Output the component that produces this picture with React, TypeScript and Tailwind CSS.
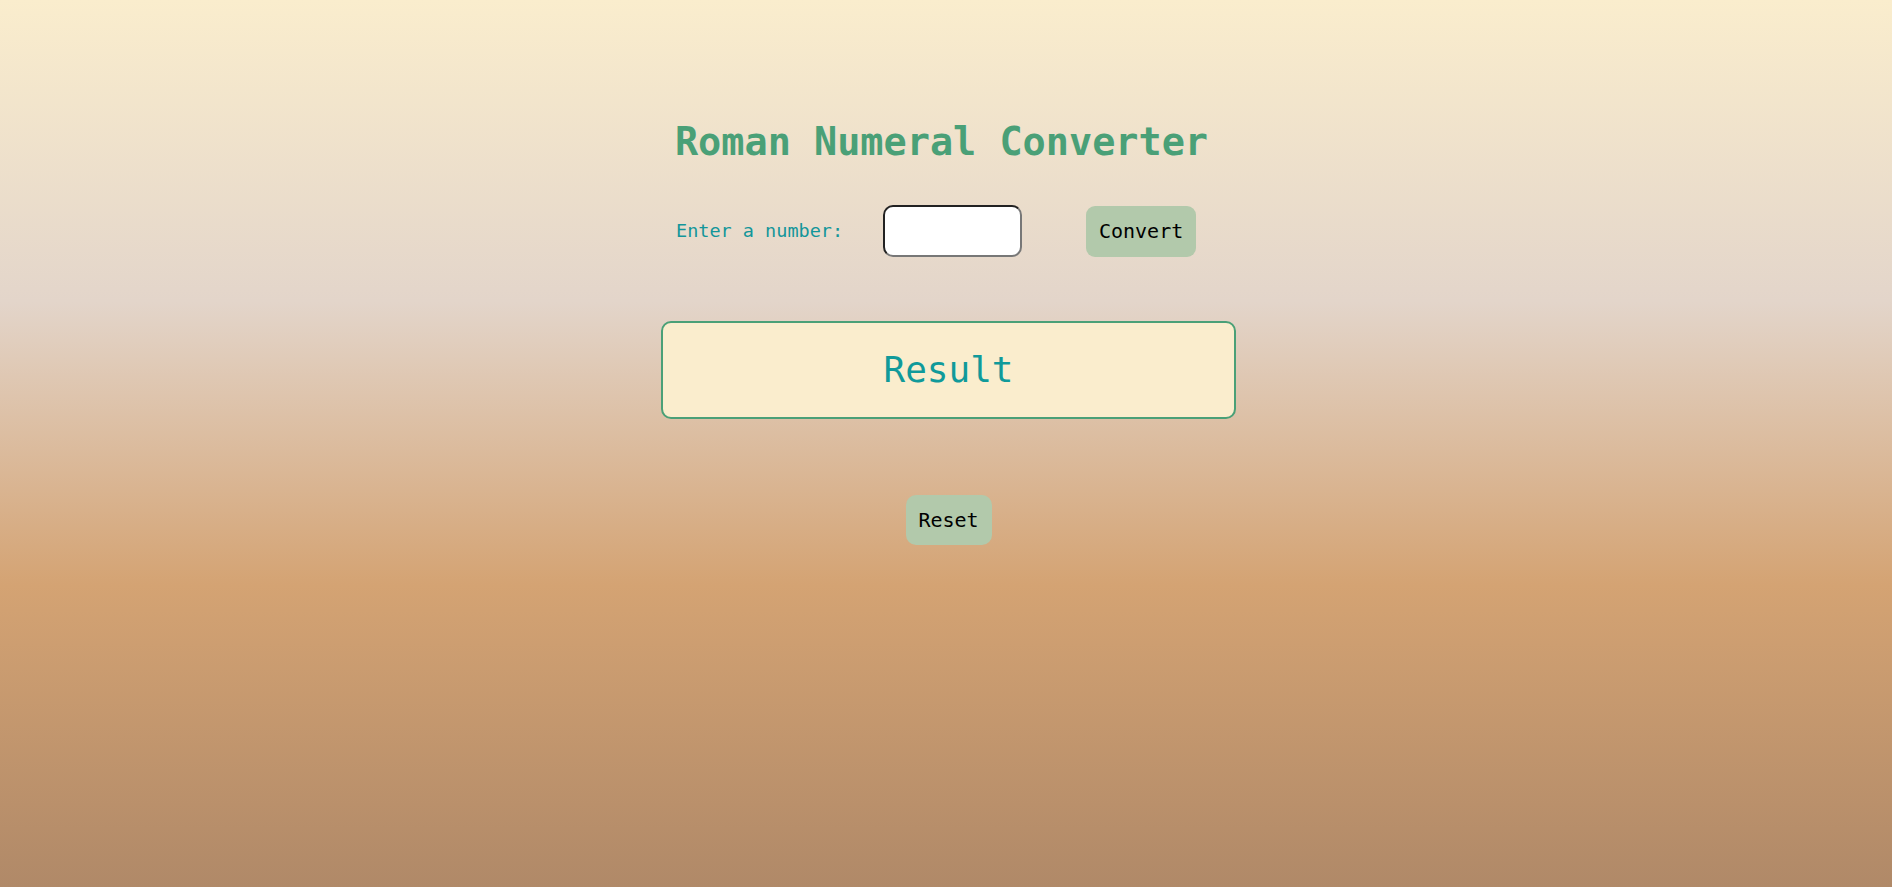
import { useState } from "react";

const romanTable: [number, string][] = [
  [1000, "M"], [900, "CM"], [500, "D"], [400, "CD"],
  [100, "C"], [90, "XC"], [50, "L"], [40, "XL"],
  [10, "X"], [9, "IX"], [5, "V"], [4, "IV"], [1, "I"],
];

function toRoman(n: number) {
  let out = "";
  for (const [v, s] of romanTable) {
    while (n >= v) {
      out += s;
      n -= v;
    }
  }
  return out;
}

export default function App() {
  const [value, setValue] = useState("");
  const [result, setResult] = useState("Result");

  function convert() {
    const n = parseInt(value, 10);
    if (!n || n < 1 || n > 3999) {
      setResult("Invalid");
      return;
    }
    setResult(toRoman(n));
  }

  return (
    <div
      className="min-h-[887px] w-full pl-[5px] bg-[linear-gradient(180deg,#faedcd_0%,#e3d5ca_34%,#d4a373_66%,#b08968_100%)]"
      style={{ fontFamily: '"DejaVu Sans Mono", "Liberation Mono", monospace' }}
    >
      <div className="mx-auto flex w-[575px] flex-col pt-[118px]">
        <h1 className="h-[47px] pr-[14px] text-center text-[38.5px] font-bold leading-[47px] text-[#4aa077]">
          Roman Numeral Converter
        </h1>

        <div className="mt-[40px] flex h-[52px] items-center pl-[15px]">
          <label className="text-[18.5px] text-[#13969a]">Enter a number:</label>
          <input
            value={value}
            onChange={(e) => setValue(e.target.value)}
            className="ml-[40px] h-[52px] w-[139px] rounded-[10px] border-2 border-t-[#222] border-l-[#222] border-b-[#777] border-r-[#777] bg-white px-2 text-[18px] outline-none"
          />
          <button
            onClick={convert}
            className="ml-[64px] h-[51px] w-[110px] rounded-[9px] bg-[#b2c9ab] text-[20px] text-black"
          >
            Convert
          </button>
        </div>

        <div className="mt-[64px] flex h-[98px] items-center justify-center rounded-[10px] border-2 border-[#4aa077] bg-[#faedcd]">
          <span className="text-[36px] text-[#109a9a]">{result}</span>
        </div>

        <div className="mt-[76px] flex justify-center">
          <button
            onClick={() => {
              setValue("");
              setResult("Result");
            }}
            className="h-[50px] w-[86px] rounded-[10px] bg-[#b2c9ab] text-[20px] text-black"
          >
            Reset
          </button>
        </div>
      </div>
    </div>
  );
}
